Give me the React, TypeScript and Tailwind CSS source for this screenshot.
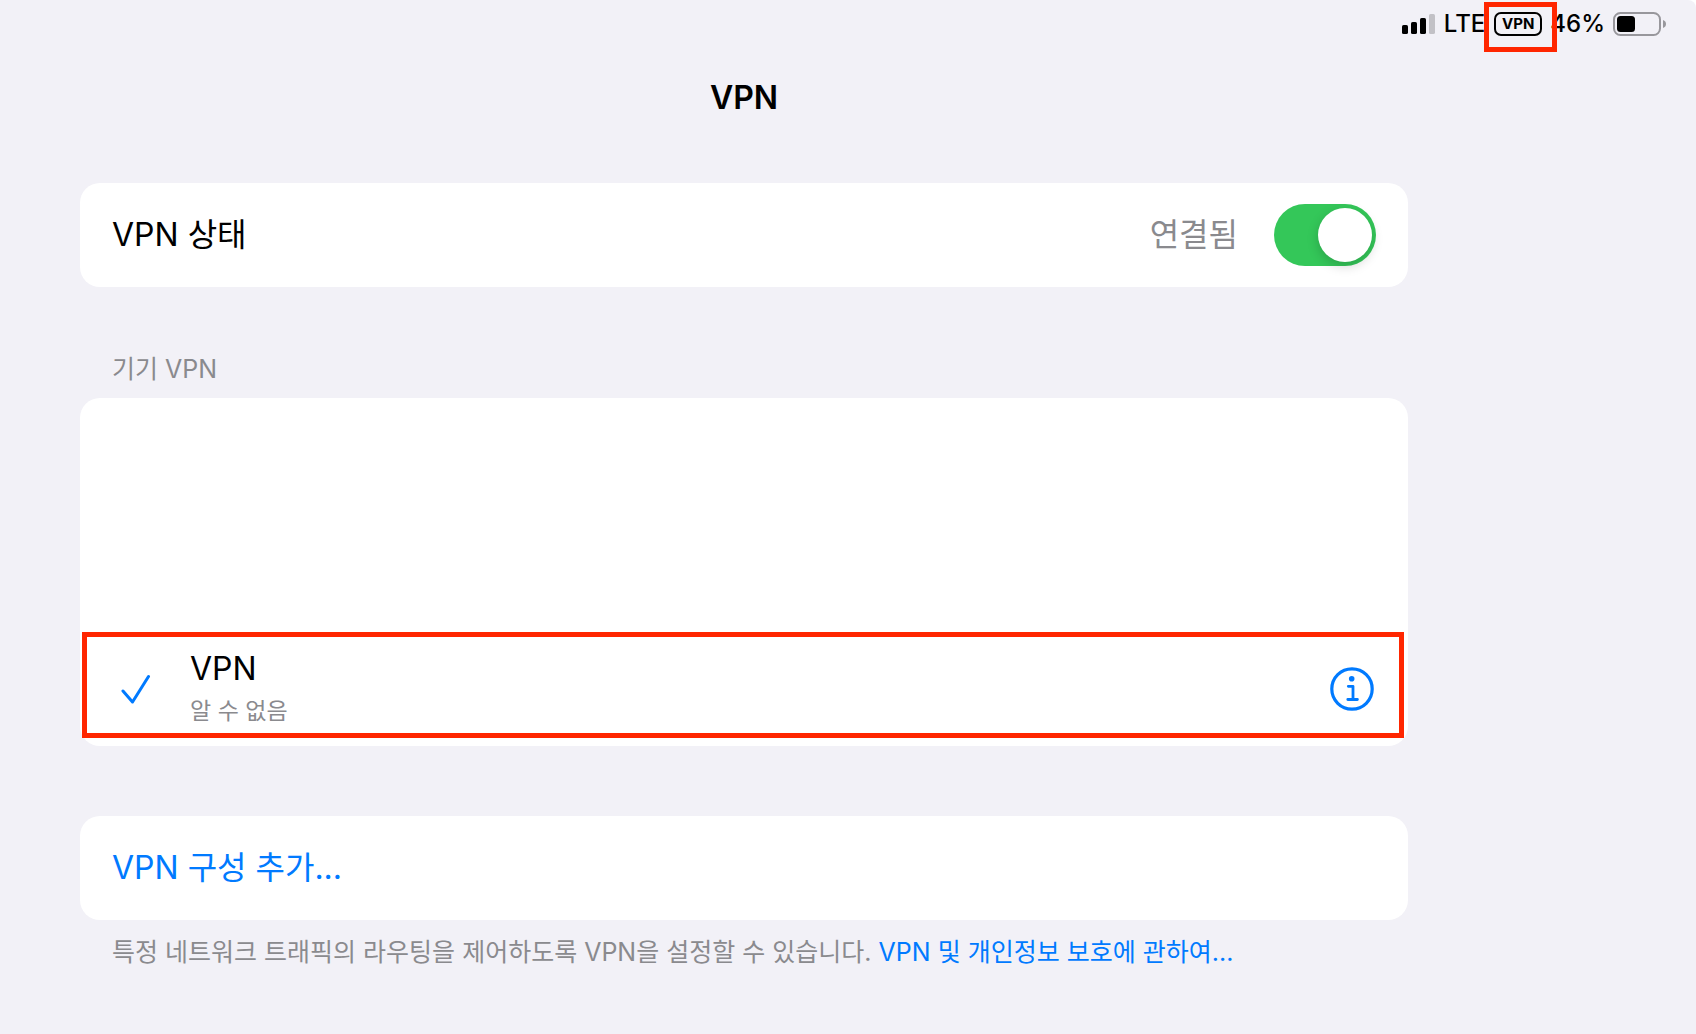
import { useState } from 'react';

function SignalBars() {
  return (
    <svg width="34" height="22" viewBox="0 0 34 22" aria-hidden="true">
      <rect x="0" y="12" width="6" height="9" rx="1.6" fill="#000" />
      <rect x="9" y="9" width="6" height="12" rx="1.6" fill="#000" />
      <rect x="18" y="5" width="6" height="16" rx="1.6" fill="#000" />
      <rect x="27" y="1" width="6" height="20" rx="1.6" fill="#c2c1c6" />
    </svg>
  );
}

function BatteryIcon() {
  return (
    <svg width="54" height="24" viewBox="0 0 54 24" aria-hidden="true">
      <rect x="1" y="1" width="46" height="22" rx="6.5" fill="none" stroke="#98979c" strokeWidth="2" />
      <rect x="4" y="4" width="18" height="16" rx="3.5" fill="#000" />
      <path d="M50 8c2 .7 3 2.2 3 4s-1 3.3-3 4z" fill="#98979c" />
    </svg>
  );
}

function CheckIcon() {
  return (
    <svg width="31" height="30" viewBox="0 0 31 30" fill="none" stroke="#007aff" strokeWidth="3" strokeLinecap="round" strokeLinejoin="round" aria-hidden="true">
      <path d="M3 17L12.5 28L28.500 2.500" />
    </svg>
  );
}

function InfoIcon() {
  return (
    <svg width="44" height="44" viewBox="0 0 44 44" fill="none" stroke="#007aff" aria-hidden="true">
      <circle cx="22" cy="22" r="20.2" strokeWidth="3.2" />
      <circle cx="21.7" cy="11.7" r="2.8" fill="#007aff" stroke="none" />
      <path d="M18.3 19.3h4.700v13.200M17.800 32.500h9.600" strokeWidth="2.800" strokeLinecap="round" strokeLinejoin="round" />
    </svg>
  );
}

export default function App() {
  const [connected, setConnected] = useState(true);

  return (
    <div className="min-h-screen bg-white font-['Inter','Noto_Sans_CJK_KR',sans-serif] text-black">
      <div className="min-h-screen rounded-tr-lg bg-[#f2f1f7]">
        {/* Status bar */}
        <div className="flex h-12 items-center justify-end pr-[29px]">
          <SignalBars />
          <span className="ml-2 text-2xl leading-6 font-medium">LTE</span>
          <div className="relative z-10 ml-[9px]">
            <div className="flex h-6 w-12 items-center justify-center rounded-[7px] border-2 border-black text-[15px] leading-5 font-bold">
              VPN
            </div>
            <div className="pointer-events-none absolute -top-[10px] -left-[10px] h-[50px] w-[73px] border-5 border-[#ff2600]" />
          </div>
          <span className="ml-2 text-2xl leading-6 font-medium">46%</span>
          <div className="ml-2">
            <BatteryIcon />
          </div>
        </div>

        <main className="pr-72 pl-20">
          <h1 className="pt-[30px] text-center text-[32px] leading-10 font-semibold">VPN</h1>

          {/* Connection state */}
          <section className="mt-[65px] flex h-26 items-center rounded-[20px] bg-white px-8">
            <label htmlFor="vpn-state" className="flex-1 text-[32px] leading-10">
              VPN 상태
            </label>
            <span className="mr-9 text-[32px] leading-10 text-[#8a8a8e]">{connected ? '연결됨' : '연결 안 됨'}</span>
            <input
              id="vpn-state"
              type="checkbox"
              role="switch"
              checked={connected}
              onChange={(e) => setConnected(e.target.checked)}
              className="flex h-[62px] w-[102px] cursor-pointer appearance-none items-center rounded-full bg-[#e9e9eb] px-1 before:h-[54px] before:w-[54px] before:rounded-full before:bg-white before:shadow-[0_4px_12px_rgba(0,0,0,0.18)] checked:justify-end checked:bg-[#34c759]"
            />
          </section>

          {/* Device VPN list */}
          <h2 className="mt-16 px-8 text-[25px] leading-9 text-[#8a8a8e]">기기 VPN</h2>
          <section className="mt-[11px] rounded-[20px] bg-white pt-[234px] pr-1 pb-2 pl-[2px]">
            <div className="flex h-[106px] items-center border-5 border-[#ff2600] pt-[7px] pr-[25px] pl-[33px]">
              <CheckIcon />
              <div className="ml-[39px] flex-1">
                <div className="text-[32px] leading-10">VPN</div>
                <div className="mt-1 text-[23px] leading-9 text-[#8a8a8e]">알 수 없음</div>
              </div>
              <button type="button" aria-label="VPN 정보" className="cursor-pointer">
                <InfoIcon />
              </button>
            </div>
          </section>

          {/* Add configuration */}
          <section className="mt-[70px] rounded-[20px] bg-white">
            <button type="button" className="h-26 w-full cursor-pointer px-8 text-left text-[32px] leading-10 text-[#007aff]">
              VPN 구성 추가...
            </button>
          </section>
          <p className="mt-[14px] px-8 text-[25px] leading-9 text-[#8a8a8e]">
            특정 네트워크 트래픽의 라우팅을 제어하도록 VPN을 설정할 수 있습니다.{' '}
            <a href="#privacy" className="text-[#007aff]">VPN 및 개인정보 보호에 관하여...</a>
          </p>
        </main>
      </div>
    </div>
  );
}
